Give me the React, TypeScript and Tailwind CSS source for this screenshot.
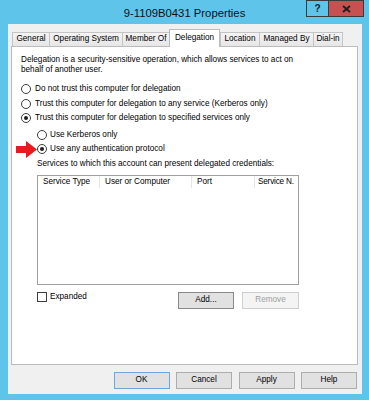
import React from 'react'

const tabs = [
  { label: 'General', cls: 'w-[38px]' },
  { label: 'Operating System', cls: 'w-[74px]' },
  { label: 'Member Of', cls: 'w-[48px]' },
  { label: 'Delegation', cls: 'w-[51px]', active: true },
  { label: 'Location', cls: 'w-[40px]' },
  { label: 'Managed By', cls: 'w-[55px]' },
  { label: 'Dial-in', cls: 'w-[30px]' },
]

function Radio({ checked }: { checked?: boolean }) {
  return (
    <span className="w-[10px] h-[10px] rounded-full border border-[#3c3c3c] bg-white flex items-center justify-center shrink-0">
      {checked && <span className="w-[4px] h-[4px] rounded-full bg-[#1e1e1e]" />}
    </span>
  )
}

function RadioRow({ label, checked, gap }: { label: string; checked?: boolean; gap: string }) {
  return (
    <div className={`flex items-center ${gap} h-[14.5px]`}>
      <Radio checked={checked} />
      <span>{label}</span>
    </div>
  )
}

function Button({ label, className }: { label: string; className: string }) {
  return (
    <div className={`h-[17px] flex items-center justify-center border ${className}`}>
      {label}
    </div>
  )
}

export default function App() {
  return (
    <div className="w-[369px] h-[400px] bg-[#5ec4ea] flex flex-col overflow-hidden font-['Liberation_Sans',Arial,sans-serif] text-black">
      {/* title bar */}
      <div className="h-[24px] shrink-0 relative flex items-center justify-center">
        <span className="text-[11.3px] text-[#111] pt-[3px]">9-1109B0431 Properties</span>
        <div className="absolute top-0 right-[5px] flex">
          <div className="w-[22px] h-[17px] border border-[#3a3a3a] border-r-0 flex items-center justify-center text-[10px] font-bold text-[#1a1a1a]">
            ?
          </div>
          <div className="w-[36px] h-[17px] bg-[#c75050] border border-[#3a3a3a] flex items-center justify-center">
            <svg width="9" height="8" viewBox="0 0 9 8">
              <path d="M1 1 L8 7 M8 1 L1 7" stroke="#1e1e1e" strokeWidth="1.8" />
            </svg>
          </div>
        </div>
      </div>

      {/* client area */}
      <div className="ml-[8px] w-[354px] h-[370px] shrink-0 bg-[#f0f0f0] flex flex-col pl-[3px] pr-[4px] pt-[5px] text-[8.2px]">
        <div className="flex items-end h-[17px] pl-[1px]">
          {tabs.map((t) =>
            t.active ? (
              <div
                key={t.label}
                className={`${t.cls} h-[18px] -mb-px relative z-10 bg-white border border-b-0 border-[#bcbcbc] flex items-center justify-center`}
              >
                {t.label}
              </div>
            ) : (
              <div
                key={t.label}
                className={`${t.cls} h-[14px] bg-gradient-to-b from-[#f4f4f4] to-[#e6e6e6] border border-b-0 border-[#c4c4c4] -mr-px flex items-center justify-center whitespace-nowrap`}
              >
                {t.label}
              </div>
            ),
          )}
        </div>

        {/* tab panel */}
        <div className="h-[319px] bg-white border border-[#bcbcbc] pl-[9px] pt-[8px] flex flex-col">
          <p className="leading-[10px]">
            Delegation is a security-sensitive operation, which allows services to act on
            <br />
            behalf of another user.
          </p>

          <div className="mt-[7px] flex flex-col">
            <RadioRow gap="gap-[4px]" label="Do not trust this computer for delegation" />
            <RadioRow gap="gap-[4px]" label="Trust this computer for delegation to any service (Kerberos only)" />
            <RadioRow gap="gap-[4px]" checked label="Trust this computer for delegation to specified services only" />
          </div>

          <div className="pl-[16px] mt-[2.5px] flex flex-col">
            <div className="flex items-center gap-[3px] h-[14px]">
              <Radio />
              <span>Use Kerberos only</span>
            </div>
            <div className="relative flex items-center gap-[3px] h-[14px]">
              <svg className="absolute left-[-21px] top-[-1px]" width="21" height="17" viewBox="0 0 21 17">
                <rect x="0" y="5" width="11" height="7" fill="#e8191f" />
                <polygon points="10,0 21,8.5 10,17" fill="#e8191f" />
              </svg>
              <Radio checked />
              <span>Use any authentication protocol</span>
            </div>
            <div className="h-[14px] mt-[1px] flex items-center">
              Services to which this account can present delegated credentials:
            </div>

            {/* list view */}
            <div className="mt-[4px] w-[262px] h-[110px] border border-[#a0a0a0] bg-white">
              <div className="flex h-[12px] whitespace-nowrap">
                <div className="w-[62px] border-r border-[#e5e5e5] pl-[5px] flex items-center">Service Type</div>
                <div className="w-[92px] border-r border-[#e5e5e5] pl-[5px] flex items-center">User or Computer</div>
                <div className="w-[63px] border-r border-[#e5e5e5] pl-[5px] flex items-center">Port</div>
                <div className="flex-1 pl-[3px] flex items-center tracking-[-0.2px]">Service N.</div>
              </div>
            </div>

            <div className="mt-[7px] w-[262px] flex justify-between items-start">
              <div className="flex items-center gap-[3px] h-[10px]">
                <span className="w-[10px] h-[10px] border border-[#3c3c3c] bg-white" />
                <span>Expanded</span>
              </div>
              <div className="flex gap-[8px]">
                <Button label="Add..." className="w-[56px] bg-[#e1e1e1] border-[#8a8a8a]" />
                <Button label="Remove" className="w-[57px] bg-[#f4f4f4] border-[#cfcfcf] text-[#a0a0a0]" />
              </div>
            </div>
          </div>
        </div>

        {/* dialog buttons */}
        <div className="flex justify-end gap-[6.5px] mt-[7px] pr-[1px]">
          <Button label="OK" className="w-[56px] bg-[#e1e1e1] border-[#6fa6de]" />
          <Button label="Cancel" className="w-[56px] bg-[#e1e1e1] border-[#adadad]" />
          <Button label="Apply" className="w-[56px] bg-[#e1e1e1] border-[#adadad]" />
          <Button label="Help" className="w-[56px] bg-[#e1e1e1] border-[#adadad]" />
        </div>
      </div>
    </div>
  )
}
